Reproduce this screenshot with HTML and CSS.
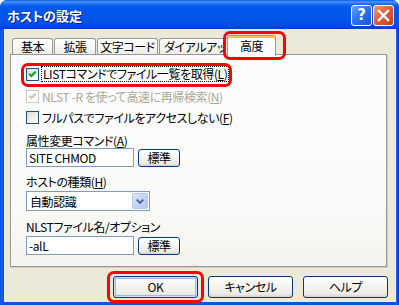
FILE: index.html
```html
<!DOCTYPE html>
<html lang="ja">
<head>
<meta charset="utf-8">
<title>ホストの設定</title>
<link rel="stylesheet" href="styles.css">
</head>
<body>
<div class="window">
  <div class="titlebar">
    <span class="title">ホストの設定</span>
    <div class="tb-buttons">
      <div class="tb-btn tb-help">?</div>
      <div class="tb-btn tb-close">
        <svg width="19" height="19" viewBox="0 0 19 19"><path d="M5 5 L14 14 M14 5 L5 14" stroke="#fff" stroke-width="2.4" stroke-linecap="square" fill="none"/></svg>
      </div>
    </div>
  </div>
  <div class="client">
    <div class="tabs">
      <div class="tab tab-1">基本</div>
      <div class="tab tab-2">拡張</div>
      <div class="tab tab-3">文字コード</div>
      <div class="tab tab-4">ダイアルアップ</div>
      <div class="tab tab-active">高度</div>
    </div>
    <div class="panel">
      <div class="check-row row-1">
        <span class="cb"><svg width="11" height="11" viewBox="0 0 11 11"><path d="M2.2 4.8 L4.4 7 L8.8 2.6" stroke="#21a121" stroke-width="2.2" fill="none"/></svg></span>
        <span class="focus">LISTコマンドでファイル一覧を取得(<u>L</u>)</span>
      </div>
      <div class="check-row row-2 disabled">
        <span class="cb"><svg width="11" height="11" viewBox="0 0 11 11"><path d="M2.2 4.8 L4.4 7 L8.8 2.6" stroke="#cac8bb" stroke-width="2.2" fill="none"/></svg></span>
        <span>NLST -R を使って高速に再帰検索(<u>N</u>)</span>
      </div>
      <div class="check-row row-3">
        <span class="cb"></span>
        <span>フルパスでファイルをアクセスしない(<u>F</u>)</span>
      </div>
      <div class="label label-a">属性変更コマンド(<u>A</u>)</div>
      <div class="field-row">
        <div class="textbox">SITE CHMOD</div>
        <div class="btn btn-small">標準</div>
      </div>
      <div class="label label-h">ホストの種類(<u>H</u>)</div>
      <div class="select">
        <span class="select-text">自動認識</span>
        <span class="select-arrow"><svg width="15" height="16" viewBox="0 0 15 16"><path d="M4 6.5 L7.5 10 L11 6.5" stroke="#4d6185" stroke-width="2" fill="none"/></svg></span>
      </div>
      <div class="label label-n">NLSTファイル名/オプション</div>
      <div class="field-row">
        <div class="textbox">-alL</div>
        <div class="btn btn-small">標準</div>
      </div>
    </div>
    <div class="actions">
      <div class="btn btn-action btn-default">OK</div>
      <div class="btn btn-action">キャンセル</div>
      <div class="btn btn-action">ヘルプ</div>
    </div>
  </div>
  <div class="mark mark-tab"></div>
  <div class="mark mark-check"></div>
  <div class="mark mark-ok"></div>
</div>
</body>
</html>
```
FILE: styles.css
```css
* { box-sizing: border-box; }
html, body { margin: 0; padding: 0; }
body {
  width: 399px;
  height: 305px;
  overflow: hidden;
  background: #ffffff;
  font-family: "Noto Sans CJK JP", "Liberation Sans", sans-serif;
  font-size: 12px;
  font-feature-settings: "palt";
  letter-spacing: -0.4px;
  color: #000;
}
u { text-decoration: underline; text-underline-offset: 1px; }

.window {
  position: relative;
  width: 399px;
  height: 305px;
  display: flex;
  flex-direction: column;
  background: linear-gradient(to right, #0831d9 0, #166aee 1px, #0855dd 3px, #0855dd 395px, #166aee 397px, #0831d9 398px);
  border-radius: 7px 7px 0 0;
}

.titlebar {
  height: 29px;
  flex: none;
  display: flex;
  align-items: center;
  padding: 0 5px 0 7px;
  border-radius: 7px 7px 0 0;
  background: linear-gradient(to bottom, #0a5fe6 0%, #4a97f7 7%, #1a6bf0 14%, #0058ee 25%, #0055ea 55%, #0052e4 80%, #0048d6 92%, #003cc0 100%);
}
.title {
  flex: 1;
  color: #fff;
  font-weight: bold;
  font-size: 13px;
  letter-spacing: 0;
  text-shadow: 1px 1px 0 #0a1883;
  padding-top: 1px;
}
.tb-buttons { display: flex; gap: 1px; padding-top: 1px; }
.tb-btn {
  width: 21px;
  height: 21px;
  border: 1px solid #fff;
  border-radius: 3px;
  display: flex;
  align-items: center;
  justify-content: center;
}
.tb-help {
  background: linear-gradient(135deg, #6aa2f8 0%, #2f73ef 45%, #1c55d8 100%);
  color: #fff;
  font-family: "DejaVu Sans", sans-serif;
  font-weight: bold;
  font-size: 15px;
  letter-spacing: 0;
  line-height: 19px;
}
.tb-close {
  background: linear-gradient(135deg, #f29a75 0%, #e2603a 45%, #c43d16 100%);
}

.client {
  flex: 1;
  margin: 0 3px 3px 4px;
  background: #ece9d8;
  padding: 6px 9px 0 6px;
  display: flex;
  flex-direction: column;
}

.tabs {
  height: 20px;
  display: flex;
  align-items: flex-end;
  padding-left: 2px;
}
.tab {
  position: relative;
  height: 17px;
  margin-right: 1px;
  border: 1px solid #919b9c;
  border-bottom: none;
  border-radius: 3px 3px 0 0;
  background: linear-gradient(to bottom, #ffffff 0%, #f7f7f4 50%, #ecebe5 100%);
  text-align: center;
  line-height: 15px;
  white-space: nowrap;
  overflow: hidden;
}
.tab-1 { width: 41px; }
.tab-2 { width: 42px; }
.tab-3 { width: 61px; }
.tab-4 { width: 71px; text-align: left; padding-left: 4px; }
.tab-active {
  width: 49px;
  height: 21px;
  margin-left: -4px;
  margin-bottom: -1px;
  z-index: 2;
  background: #fcfcfe;
  border-top-color: #e68b2c;
  box-shadow: inset 0 2px 0 #ffc83c;
  line-height: 17px;
  padding-top: 1px;
}

.panel {
  position: relative;
  z-index: 1;
  height: 213px;
  margin-top: -1px;
  border: 1px solid #919b9c;
  box-shadow: 1px 1px 0 #d0cdc0;
  background: linear-gradient(to bottom, #fcfcfe 0%, #fafaf8 70%, #f4f3ee 100%);
  padding: 8px 0 0 15px;
  display: flex;
  flex-direction: column;
  align-items: flex-start;
}

.check-row {
  display: flex;
  align-items: center;
  height: 22px;
  white-space: nowrap;
}
.row-3 { height: 21px; }
.cb {
  width: 13px;
  height: 13px;
  margin-right: 3px;
  border: 1px solid #1c5180;
  background: linear-gradient(135deg, #dcdcd7 0%, #f4f4f0 60%, #ffffff 100%);
  display: flex;
  align-items: center;
  justify-content: center;
  flex: none;
}
.disabled { color: #aca899; }
.disabled .cb { border-color: #cac8bb; background: #ffffff; }
.focus {
  outline: 1px dotted #000;
  outline-offset: 0;
  padding: 0 1px;
  line-height: 14px;
}

.label { line-height: 14px; white-space: nowrap; }
.label-a { margin-top: 6px; }
.label-h { margin-top: 8px; }
.label-n { margin-top: 9px; }

.field-row {
  display: flex;
  align-items: center;
  gap: 4px;
  height: 19px;
  margin-top: 0;
}
.label-n + .field-row { margin-top: 2px; }
.textbox {
  width: 108px;
  height: 19px;
  border: 1px solid #7f9db9;
  background: #fff;
  padding: 0 2px;
  line-height: 17px;
}

.btn {
  border: 1px solid #003c74;
  border-radius: 3px;
  background: linear-gradient(to bottom, #ffffff 0%, #f6f5f1 40%, #ecebe6 85%, #d6d0c5 100%);
  text-align: center;
}
.btn-small {
  width: 42px;
  height: 18px;
  line-height: 16px;
}

.select {
  margin-top: 2px;
  width: 124px;
  height: 20px;
  border: 1px solid #7f9db9;
  background: #fff;
  display: flex;
  align-items: center;
  justify-content: space-between;
  padding: 0 1px 0 3px;
}
.select-arrow {
  width: 16px;
  height: 16px;
  border: 1px solid #b5c8f0;
  border-radius: 2px;
  background: linear-gradient(135deg, #dbe6fd 0%, #c3d4fb 50%, #b1c6f5 100%);
  display: flex;
  align-items: center;
  justify-content: center;
}

.actions {
  display: flex;
  justify-content: flex-end;
  gap: 10px;
  margin-top: 9px;
  padding-right: 0;
  margin-right: -1px;
}
.btn-action {
  width: 85px;
  height: 22px;
  line-height: 20px;
}
.btn-default {
  box-shadow: inset 0 0 0 1px #cee0fa, inset 0 0 0 2px #9bbbec;
}

.mark {
  position: absolute;
  z-index: 5;
  border: 3px solid #ff0000;
  border-radius: 7px;
}
.mark-tab { left: 223px; top: 31px; width: 63px; height: 29px; }
.mark-check { left: 21px; top: 63px; width: 211px; height: 24px; }
.mark-ok { left: 107px; top: 271px; width: 97px; height: 32px; }
```
